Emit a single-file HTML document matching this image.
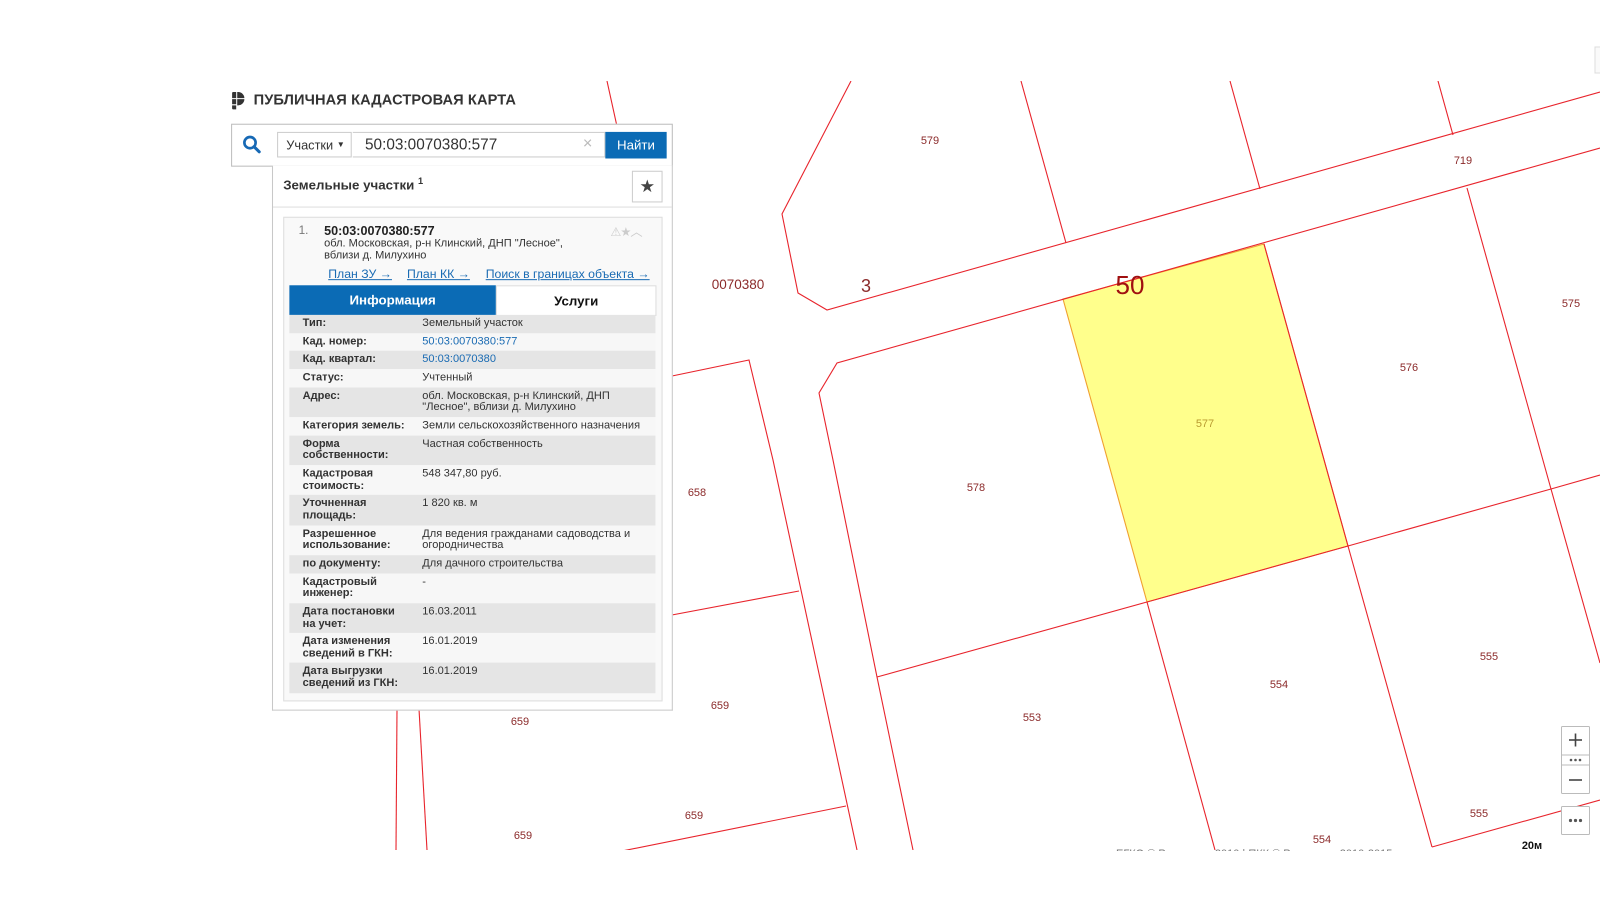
<!DOCTYPE html>
<html><head><meta charset="utf-8">
<style>
html,body{margin:0;padding:0;background:#fff;width:1600px;height:900px;overflow:hidden;font-family:"Liberation Sans","DejaVu Sans",sans-serif;}
#map{position:absolute;left:0;top:0}
#ui{position:absolute;left:0;top:0;width:1600px;height:900px;transform:scale(1.0225);transform-origin:0 0;}
.a{position:absolute}
.lbl{font-size:11px;fill:#8b2a2a;font-family:"Liberation Sans Narrow","Liberation Sans",sans-serif;}
.tb{position:absolute;left:283px;top:308px;width:358px;font-size:10.8px;color:#333;line-height:11.6px}
.tb div.r{display:flex;box-sizing:border-box;padding:3px 0 3px 13px}
.tb div.r:nth-child(odd){background:#e5e5e5}
.tb div.r:nth-child(even){background:#f7f7f7}
.tb .k{width:105px;margin-right:12px;font-weight:bold;flex:none}
.tb .v{flex:1}
.lnk{color:#1a6bb3}
</style></head><body>
<svg id="map" width="1600" height="900">
<defs><clipPath id="c"><rect x="0" y="81" width="1600" height="769"/></clipPath></defs>
<g clip-path="url(#c)" fill="none" stroke="#e8242c" stroke-width="1.1">
<polygon points="1063,299 1264,244 1348,546 1147,602" fill="#ffff8c" stroke="#f0a030"/>
<polyline points="851,81 782,214 798,293 827,310 1600,92"/>
<polyline points="1600,148 837,363 819,393 833,460 877,677 913,850"/>
<line x1="1021" y1="81" x2="1066" y2="243"/>
<line x1="1230" y1="81" x2="1260" y2="189"/>
<line x1="1438" y1="81" x2="1453" y2="135"/>
<polyline points="1264,244 1348,546 1432,847"/>
<line x1="1147" y1="602" x2="1215" y2="850"/>
<polyline points="1467,188 1551,489 1600,663"/>
<polyline points="877,677 1147,602 1348,546 1551,489 1600,475"/>
<line x1="1432" y1="847" x2="1600" y2="800"/>
<polyline points="607,81 672,376 749,360 773,460 857,850"/>
<line x1="640" y1="621" x2="799" y2="591"/>
<line x1="622" y1="851" x2="846" y2="806"/>
<line x1="397" y1="709" x2="396" y2="850"/>
<line x1="419" y1="709" x2="427" y2="850"/>
</g>
<g text-anchor="middle">
<text class="lbl" x="930" y="144">579</text>
<text class="lbl" x="1463" y="164">719</text>
<text class="lbl" x="738" y="289" style="font-size:13.5px">0070380</text>
<text class="lbl" x="866" y="292" style="font-size:18px">3</text>
<text x="1130" y="294" style="font-size:26px;fill:#a01010;font-family:'Liberation Sans',sans-serif">50</text>
<text class="lbl" x="1571" y="307">575</text>
<text class="lbl" x="1409" y="371">576</text>
<text class="lbl" x="1205" y="427" style="fill:#b89a30">577</text>
<text class="lbl" x="697" y="496">658</text>
<text class="lbl" x="976" y="491">578</text>
<text class="lbl" x="720" y="709">659</text>
<text class="lbl" x="1032" y="721">553</text>
<text class="lbl" x="1279" y="688">554</text>
<text class="lbl" x="1489" y="660">555</text>
<text class="lbl" x="694" y="819">659</text>
<text class="lbl" x="1479" y="817">555</text>
<text class="lbl" x="1322" y="843">554</text>
<text class="lbl" x="520" y="725">659</text>
<text class="lbl" x="523" y="839">659</text>
</g>
<text x="1116" y="857" style="font-size:11px;fill:#777">ЕГКО © Росреестр 2010 | ПКК © Росреестр 2010-2015</text>
<rect x="0" y="851" width="1600" height="49" fill="#fff"/>
<rect x="1595" y="47" width="6" height="26" fill="#fafafa" stroke="#ddd"/>
<text x="1532" y="849" text-anchor="middle" style="font-size:11px;font-weight:bold;fill:#111">20м</text>
<g stroke="#bbb" fill="#fff">
<rect x="1561.5" y="726.5" width="28" height="67" rx="1"/>
<rect x="1561.5" y="806.5" width="28" height="28" rx="1"/>
<line x1="1562" y1="755" x2="1589" y2="755"/><line x1="1562" y1="765" x2="1589" y2="765"/>
</g>
<g stroke="#444" stroke-width="1.6"><line x1="1569" y1="740" x2="1582" y2="740"/><line x1="1575.5" y1="733.5" x2="1575.5" y2="746.5"/><line x1="1569" y1="780" x2="1582" y2="780"/></g>
<g fill="#555"><circle cx="1571" cy="760" r="1.3"/><circle cx="1575.5" cy="760" r="1.3"/><circle cx="1580" cy="760" r="1.3"/>
<circle cx="1570.5" cy="820.5" r="1.6"/><circle cx="1575.5" cy="820.5" r="1.6"/><circle cx="1580.5" cy="820.5" r="1.6"/></g>
</svg>

<div id="ui">
<svg class="a" style="left:226px;top:89px" width="15" height="19" viewBox="0 0 15 19"><path d="M1 2a1 1 0 0 1 1-1h3v6H1z M6 1h1a6 6 0 0 1 6 6H6z M1 8h4v5H1z M6 8h7a6 6 0 0 1-6 6H6z M1 14h4v4H2a1 1 0 0 1-1-1z" fill="#333"/></svg>
<div class="a" style="left:248px;top:90px;font-size:14.3px;font-weight:bold;color:#333;letter-spacing:0.1px">ПУБЛИЧНАЯ КАДАСТРОВАЯ КАРТА</div>

<div class="a" style="left:226px;top:121px;width:430px;height:40px;border:1px solid #bcbcbc;background:#fff"></div>
<svg class="a" style="left:237px;top:132px" width="19" height="19" viewBox="0 0 19 19"><circle cx="7.5" cy="7.5" r="5.5" fill="none" stroke="#1769b5" stroke-width="2.6"/><line x1="11.5" y1="11.5" x2="16.5" y2="16.5" stroke="#1769b5" stroke-width="3" stroke-linecap="round"/></svg>
<div class="a" style="left:271px;top:129px;width:73px;height:25px;border:1px solid #ccc;background:#fff;font-size:12.5px;color:#333;line-height:25px;padding-left:8px;box-sizing:border-box">Участки <span style="font-size:8px;position:relative;top:-2px">▼</span></div>
<div class="a" style="left:345px;top:129px;width:247px;height:25px;border:1px solid #ccc;border-left:none;box-sizing:border-box;background:#fff"></div>
<div class="a" style="left:357px;top:133px;font-size:15px;color:#333">50:03:0070380:577</div>
<div class="a" style="left:570px;top:132px;font-size:16px;color:#bbb">×</div>
<div class="a" style="left:592px;top:129px;width:60px;height:26px;background:#0b6bb5;color:#fff;font-size:13px;line-height:26px;text-align:center">Найти</div>

<div class="a" style="left:266px;top:162px;width:390px;height:532px;border:1px solid #c8c8c8;border-top:none;background:#fff"></div>
<div class="a" style="left:277px;top:172px;font-size:13px;font-weight:bold;color:#333">Земельные участки <sup style="font-size:9px">1</sup></div>
<div class="a" style="left:618px;top:167px;width:28px;height:29px;border:1px solid #ccc;background:#fff;font-size:17px;color:#444;text-align:center;line-height:29px">★</div>
<div class="a" style="left:267px;top:202px;width:390px;height:1px;background:#ddd"></div>

<div class="a" style="left:277px;top:212px;width:369px;height:472px;border:1px solid #ddd;background:#f9f9f9"></div>
<div class="a" style="left:292px;top:220px;font-size:11.5px;color:#777">1.</div>
<div class="a" style="left:317px;top:219px;font-size:12.3px;font-weight:bold;color:#222">50:03:0070380:577</div>
<div class="a" style="left:317px;top:232px;font-size:10.8px;color:#333;line-height:12px">обл. Московская, р-н Клинский, ДНП "Лесное",<br>вблизи д. Милухино</div>
<div class="a" style="left:597px;top:218px;font-size:12px;color:#ccc;letter-spacing:-1px">⚠★︿</div>
<div class="a" style="left:321px;top:261px;font-size:12px;color:#1a6bb3;text-decoration:underline">План ЗУ →</div>
<div class="a" style="left:398px;top:261px;font-size:12px;color:#1a6bb3;text-decoration:underline">План КК →</div>
<div class="a" style="left:475px;top:261px;font-size:12px;color:#1a6bb3;text-decoration:underline">Поиск в границах объекта →</div>

<div class="a" style="left:283px;top:279px;width:202px;height:29px;background:#0b6bb5;color:#fff;font-weight:bold;font-size:13px;line-height:30px;text-align:center">Информация</div>
<div class="a" style="left:485px;top:279px;width:155px;height:28px;border:1px solid #ddd;background:#fff;color:#111;font-weight:bold;font-size:13px;line-height:30px;text-align:center">Услуги</div>

<div class="tb">
<div class="r" style="height:18px"><div class="k">Тип:</div><div class="v">Земельный участок</div></div>
<div class="r" style="height:17px"><div class="k">Кад. номер:</div><div class="v lnk">50:03:0070380:577</div></div>
<div class="r" style="height:18px"><div class="k">Кад. квартал:</div><div class="v lnk">50:03:0070380</div></div>
<div class="r" style="height:17.5px"><div class="k">Статус:</div><div class="v">Учтенный</div></div>
<div class="r" style="height:29.5px"><div class="k">Адрес:</div><div class="v">обл. Московская, р-н Клинский, ДНП "Лесное", вблизи д. Милухино</div></div>
<div class="r" style="height:17.5px"><div class="k" style="white-space:nowrap">Категория земель:</div><div class="v">Земли сельскохозяйственного назначения</div></div>
<div class="r" style="height:29.5px"><div class="k">Форма собственности:</div><div class="v">Частная собственность</div></div>
<div class="r" style="height:29px"><div class="k">Кадастровая стоимость:</div><div class="v">548 347,80 руб.</div></div>
<div class="r" style="height:29.5px"><div class="k">Уточненная площадь:</div><div class="v">1 820 кв. м</div></div>
<div class="r" style="height:29.5px"><div class="k">Разрешенное использование:</div><div class="v">Для ведения гражданами садоводства и огородничества</div></div>
<div class="r" style="height:17.5px"><div class="k">по документу:</div><div class="v">Для дачного строительства</div></div>
<div class="r" style="height:29.5px"><div class="k">Кадастровый инженер:</div><div class="v">-</div></div>
<div class="r" style="height:29px"><div class="k">Дата постановки<br>на учет:</div><div class="v">16.03.2011</div></div>
<div class="r" style="height:29px"><div class="k">Дата изменения сведений в ГКН:</div><div class="v">16.01.2019</div></div>
<div class="r" style="height:30px"><div class="k">Дата выгрузки сведений из ГКН:</div><div class="v">16.01.2019</div></div>
</div>
</div>
</body></html>
